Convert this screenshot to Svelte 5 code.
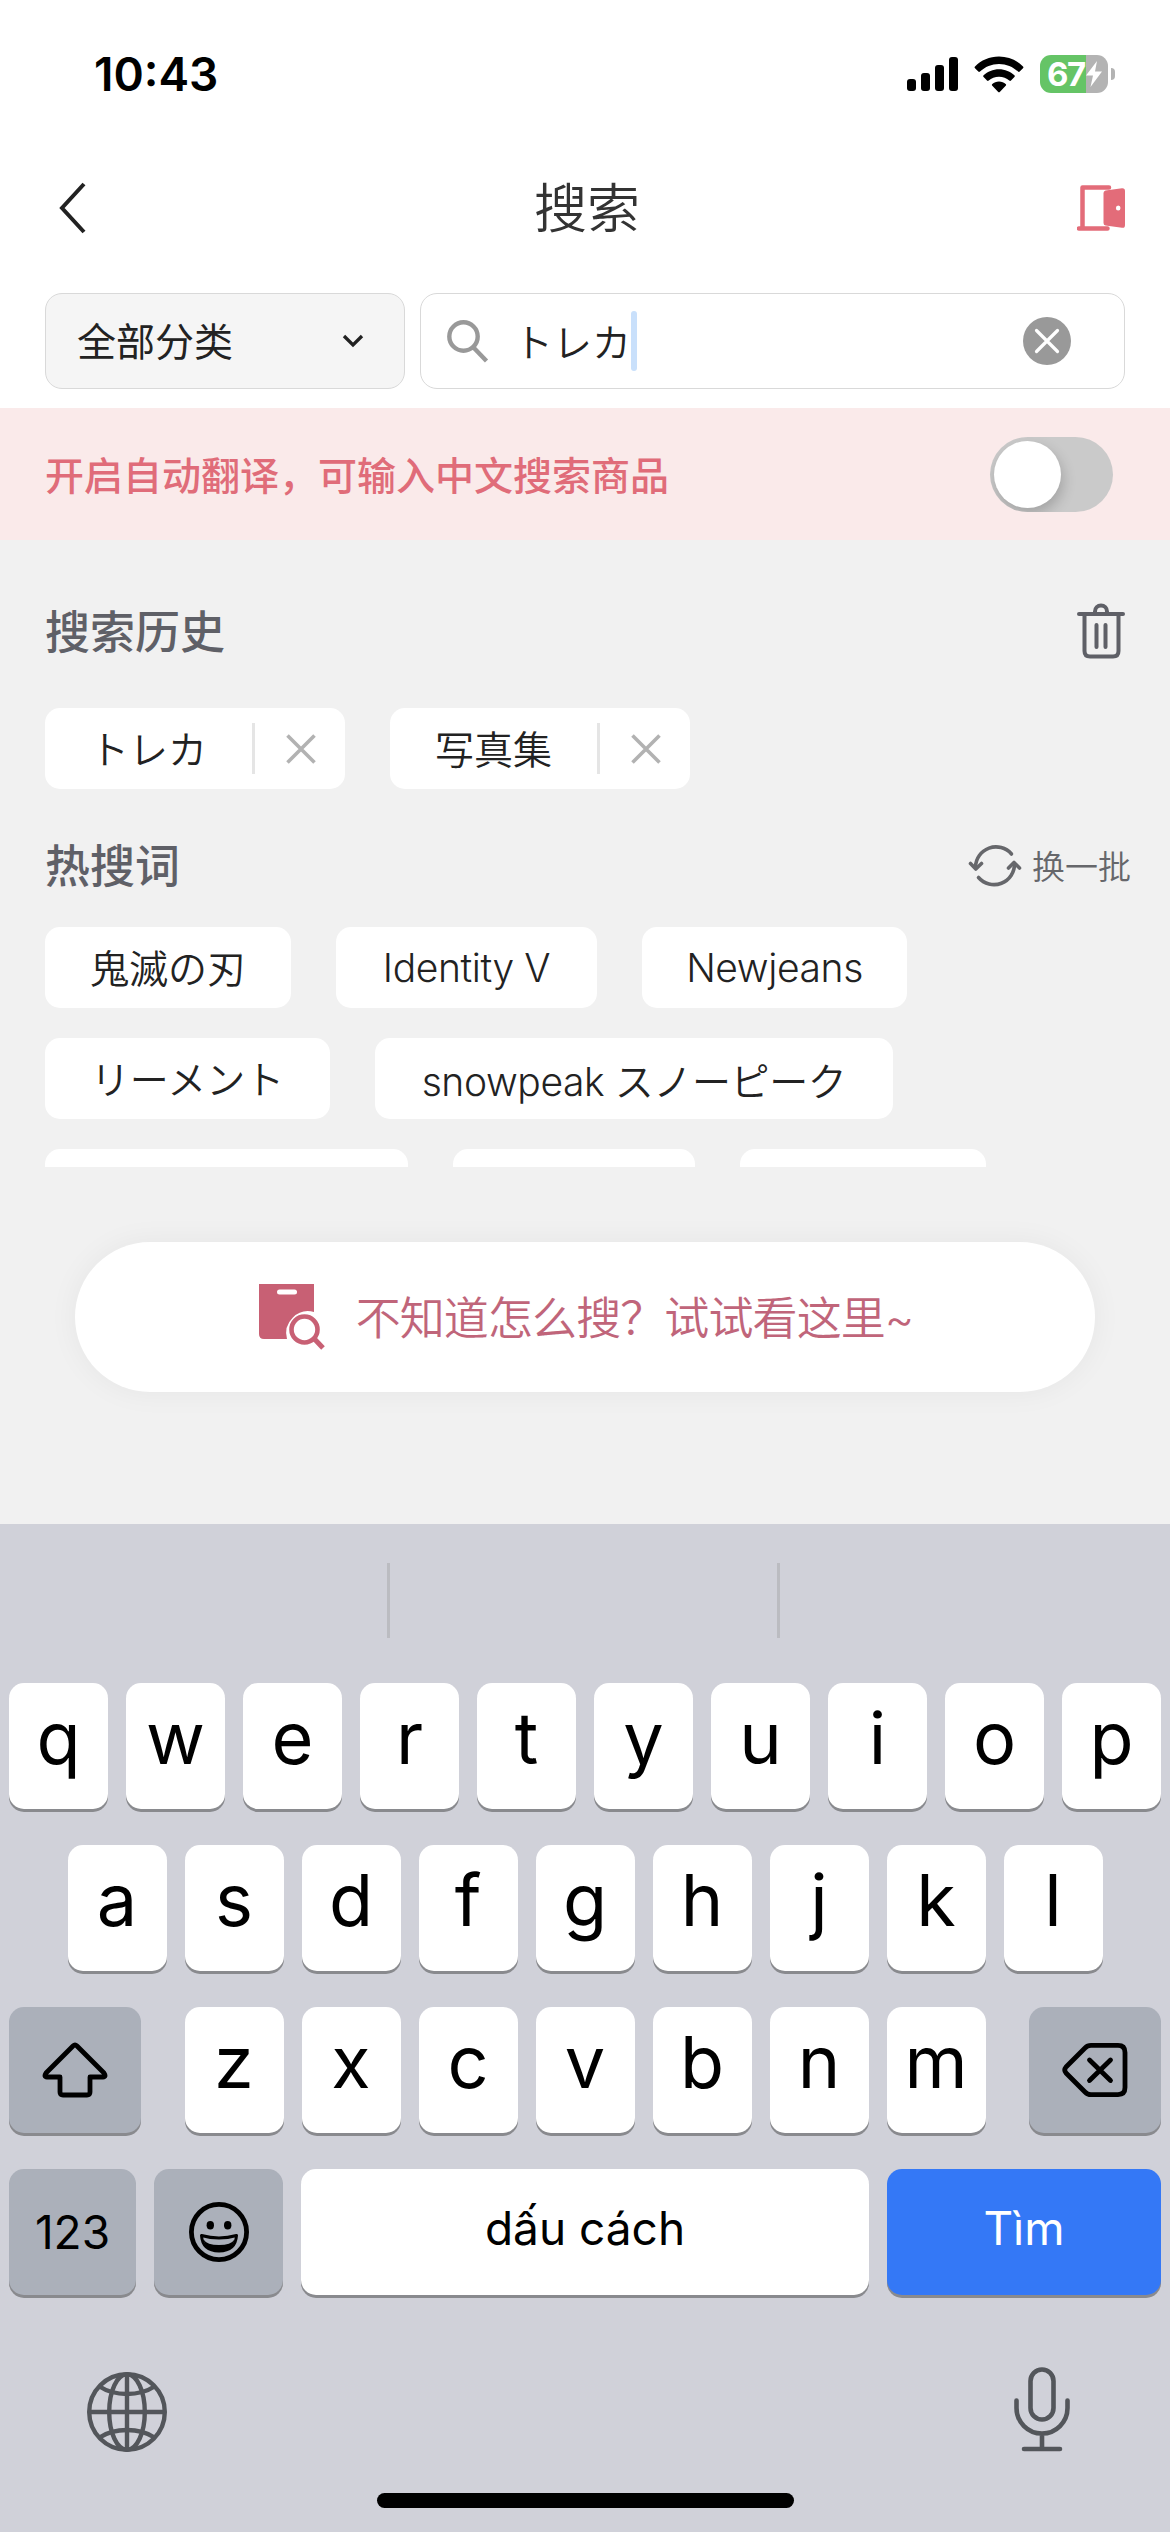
<script lang="ts">
  let keyword = 'トレカ';
  let autoTranslate = false;

  const history = ['トレカ', '写真集'];

  const hotRows = [
    [
      { text: '鬼滅の刃', width: 246 },
      { text: 'Identity V', width: 261 },
      { text: 'Newjeans', width: 265 },
    ],
    [
      { text: 'リーメント', width: 285 },
      { text: 'snowpeak スノーピーク', width: 518 },
    ],
    // only the top edge of this row shows
    [
      { text: '', width: 363 },
      { text: '', width: 242 },
      { text: '', width: 246 },
    ],
  ];

  const row1 = 'qwertyuiop'.split('');
  const row2 = 'asdfghjkl'.split('');
  const row3 = 'zxcvbnm'.split('');

  function isLatin(text: string) {
    return /^[a-z]/i.test(text);
  }

  function toggleTranslate() {
    autoTranslate = !autoTranslate;
  }

  function clearKeyword() {
    keyword = '';
  }
</script>

<div class="screen">
  <div class="status-bar">
    <span class="time">10:43</span>
    <div class="status-icons">
      <svg class="signal" width="52" height="34" viewBox="0 0 52 34">
        <rect x="0" y="22" width="9" height="12" rx="3" />
        <rect x="14" y="16" width="9" height="18" rx="3" />
        <rect x="28" y="8" width="9" height="26" rx="3" />
        <rect x="42" y="0" width="9" height="34" rx="3" />
      </svg>
      <svg class="wifi" width="50" height="37" viewBox="0 0 50 37">
        <path d="M25 0.5C34.5 0.5 43 4.3 49 10.4C49.6 11 49.6 11.6 49 12.200L45.700 15.600C45.200 16.100 44.600 16.100 44 15.600C39 10.800 32.300 8 25 8S11 10.800 6 15.600C5.400 16.100 4.800 16.100 4.300 15.600L1 12.200C0.400 11.600 0.400 11 1 10.400C7 4.300 15.500 0.500 25 0.500Z" />
        <path d="M25 13.200C31 13.200 36.400 15.500 40.400 19.300C41 19.900 41 20.500 40.400 21.100L37 24.500C36.500 25 35.900 25 35.300 24.500C32.600 22.100 29 20.700 25 20.700S17.400 22.100 14.700 24.500C14.100 25 13.500 25 13 24.500L9.600 21.100C9 20.500 9 19.900 9.600 19.300C13.600 15.500 19 13.200 25 13.200Z" />
        <path d="M25 25.400C27.700 25.400 30 26.400 31.700 28C32.300 28.600 32.300 29.200 31.700 29.800L26 35.700C25.300 36.400 24.700 36.400 24 35.700L18.300 29.800C17.700 29.200 17.700 28.600 18.300 28C20 26.400 22.300 25.400 25 25.400Z" />
      </svg>
      <div class="battery">
        <div class="battery-body">
          <span>67</span>
          <svg width="18" height="28" viewBox="0 0 18 26"><path d="M12 0L1 14.500H8L5.500 26L17 10.500H10Z" fill="#fff" /></svg>
        </div>
        <div class="battery-cap"></div>
      </div>
    </div>
  </div>

  <header class="nav">
    <button class="icon-button" aria-label="back">
      <svg width="34" height="56" viewBox="0 0 34 56"><path d="M28 4L6 28L28 52" fill="none" stroke="#222" stroke-width="4" /></svg>
    </button>
    <h1>搜索</h1>
    <button class="icon-button" aria-label="exit">
      <svg width="48" height="46" viewBox="0 0 48 46">
        <path d="M32 2.500H5.500V43.500M2 43.500H30.500" fill="none" stroke="#e36c79" stroke-width="4.500" stroke-linecap="round" stroke-linejoin="round" />
        <path d="M28.500 5.500L45 3.200Q48 3 48 6V40Q48 43.300 45 42.800L28.500 40.500Q26.500 40 26.500 38V8Q26.500 6 28.500 5.500Z" fill="#e36c79" />
        <ellipse cx="41.200" cy="23" rx="2.300" ry="2.500" fill="#fff" />
      </svg>
    </button>
  </header>

  <div class="search-row">
    <button class="category">
      <span>全部分类</span>
      <svg width="22" height="14" viewBox="0 0 22 14"><path d="M2 2L11 11L20 2" fill="none" stroke="#222" stroke-width="3.300" /></svg>
    </button>
    <div class="search-box">
      <svg width="42" height="43" viewBox="0 0 42 43">
        <circle cx="16.500" cy="16.500" r="14.200" fill="none" stroke="#999" stroke-width="4.400" />
        <path d="M26.500 27.500L39.500 41" stroke="#999" stroke-width="4.400" />
      </svg>
      <span class="keyword" lang="ja">{keyword}</span>
      <span class="caret"></span>
      <button class="icon-button clear" aria-label="clear" on:click={clearKeyword}>
        <svg width="48" height="48" viewBox="0 0 48 48">
          <circle cx="24" cy="24" r="24" fill="#999" />
          <path d="M13.500 13.500L34.500 34.500M34.500 13.500L13.500 34.500" stroke="#fff" stroke-width="3.200" stroke-linecap="round" />
        </svg>
      </button>
    </div>
  </div>

  <div class="translate">
    <span>开启自动翻译，可输入中文搜索商品</span>
    <button class="switch" class:on={autoTranslate} aria-label="auto translate" on:click={toggleTranslate}>
      <span class="knob"></span>
    </button>
  </div>

  <main>
    <div class="section-head">
      <h2>搜索历史</h2>
      <button class="icon-button" aria-label="clear history">
        <svg width="48" height="56" viewBox="0 0 48 56">
          <g fill="none" stroke="#5f6067" stroke-width="4" stroke-linecap="round">
            <path d="M2 11H46" />
            <path d="M18 10V8.500A6 6 0 0 1 30 8.500V10" />
            <path d="M7.500 12V48Q7.500 53.500 13 53.500H36Q41.500 53.500 41.500 48V12" />
            <path d="M19.500 22V44M28.500 22V44" />
          </g>
        </svg>
      </button>
    </div>

    <div class="chips">
      {#each history as item}
        <div class="chip history-chip">
          <span class="chip-text" lang="ja">{item}</span>
          <span class="chip-line"></span>
          <button class="icon-button chip-x" aria-label="remove">
            <svg width="30" height="30" viewBox="0 0 30 30"><path d="M1.500 1.500L28.500 28.500M28.500 1.500L1.500 28.500" stroke="#b2b2b2" stroke-width="3.600" /></svg>
          </button>
        </div>
      {/each}
    </div>

    <div class="section-head hot-head">
      <h2>热搜词</h2>
      <button class="refresh">
        <svg width="54" height="48" viewBox="0 0 54 48">
          <g fill="none" stroke="#66676b" stroke-width="3.600" stroke-linecap="round" stroke-linejoin="round">
            <path d="M43.500 13A20.500 20.500 0 0 0 7.500 26" />
            <path d="M2.500 22.500L7.800 28L13.500 22.500" />
            <path d="M10.500 36.500A20.500 20.500 0 0 0 46.500 22.500" />
            <path d="M40.500 27L46 21.500L51.500 27" />
          </g>
        </svg>
        <span>换一批</span>
      </button>
    </div>

    <div class="hot-words">
      {#each hotRows as row}
        <div class="chips">
          {#each row as word}
            <div class="chip hot-chip" class:latin={isLatin(word.text)} style="width: {word.width}px" lang="ja">{word.text}</div>
          {/each}
        </div>
      {/each}
    </div>

    <button class="help">
      <svg width="66" height="66" viewBox="0 0 66 66">
        <path d="M0 0H55V28A22 22 0 0 0 28 55H5Q0 55 0 50Z" fill="#c86074" />
        <rect x="18" y="5.500" width="20" height="5" rx="2.500" fill="#fff" />
        <circle cx="45.500" cy="45.500" r="13" fill="#fff" stroke="#c86074" stroke-width="4.600" />
        <path d="M55 54.500L64 64" stroke="#c86074" stroke-width="5" />
      </svg>
      <span>不知道怎么搜？试试看这里~</span>
    </button>
  </main>

  <div class="keyboard">
    <div class="suggestions">
      <span></span>
      <span></span>
      <span></span>
    </div>
    <div class="keys">
      <div class="key-row">
        {#each row1 as key}
          <button class="key letter">{key}</button>
        {/each}
      </div>
      <div class="key-row">
        {#each row2 as key}
          <button class="key letter">{key}</button>
        {/each}
      </div>
      <div class="key-row spread">
        <button class="key gray wide" aria-label="shift">
          <svg width="66" height="56" viewBox="0 0 66 56"><path d="M31 4Q33 2 35 4L62 31Q64.500 35 61 35H48V50Q48 53 45 53H21Q18 53 18 50V35H5Q1.500 35 4 31Z" fill="none" stroke="#000" stroke-width="4.800" stroke-linejoin="round" /></svg>
        </button>
        <div class="key-row">
          {#each row3 as key}
            <button class="key letter">{key}</button>
          {/each}
        </div>
        <button class="key gray wide" aria-label="delete">
          <svg width="66" height="54" viewBox="0 0 66 54">
            <g fill="none" stroke="#000" stroke-width="4.800" stroke-linejoin="round" stroke-linecap="round">
              <path d="M29 2.400H56Q63 2.400 63 9.400V44.600Q63 51.600 56 51.600H29Q25.500 51.600 23 49L4 30Q1.500 27 4 24L23 5Q25.500 2.400 29 2.400Z" />
              <path d="M27.500 17L48.500 37.500M48.500 17L27.500 37.500" />
            </g>
          </svg>
        </button>
      </div>
      <div class="key-row bottom-row">
        <button class="key gray numbers">123</button>
        <button class="key gray emoji" aria-label="emoji">
          <svg width="60" height="60" viewBox="0 0 60 60">
            <circle cx="30" cy="30" r="27.600" fill="none" stroke="#000" stroke-width="4.800" />
            <ellipse cx="21.300" cy="23.200" rx="3.700" ry="4.200" />
            <ellipse cx="38.700" cy="23.200" rx="3.700" ry="4.200" />
            <path d="M12.500 33.500Q30 38.500 47.500 33.500Q46.500 49 30 49T12.500 33.500Z" fill="none" stroke="#000" stroke-width="3" stroke-linejoin="round" />
            <path d="M14.500 37.500Q18 43 30 43T45.500 37.500Q43 49 30 49T14.500 37.500Z" />
          </svg>
        </button>
        <button class="key space">dấu cách</button>
        <button class="key search">Tìm</button>
      </div>
    </div>
    <div class="system-row">
      <svg class="globe" width="80" height="80" viewBox="0 0 80 80">
        <g fill="none" stroke="#53565b" stroke-width="4.400">
          <circle cx="40" cy="40" r="37.800" />
          <ellipse cx="40" cy="40" rx="17.800" ry="37.800" />
          <path d="M40 2V78M2 40H78" />
          <path d="M12.500 14.500Q24 22 40 22T67.500 14.500M12.500 65.500Q24 58 40 58T67.500 65.500" />
        </g>
      </svg>
      <svg width="56" height="85" viewBox="0 0 56 85">
        <g fill="none" stroke="#53565b" stroke-width="4.600" stroke-linecap="round">
          <rect x="16.500" y="2.500" width="23" height="50" rx="11.500" />
          <path d="M2.500 33.500V41A25.500 25.500 0 0 0 53.500 41V33.500M28 67V81M10 82H46" />
        </g>
      </svg>
    </div>
    <div class="home-indicator"></div>
  </div>
</div>

<style>
  :global(body) {
    margin: 0;
  }

  .screen {
    width: 1170px;
    height: 2532px;
    display: flex;
    flex-direction: column;
    overflow: hidden;
    background: #fff;
    color: #222;
    font-family: "Inter", "Noto Sans CJK SC", sans-serif;
  }

  button {
    margin: 0;
    padding: 0;
    border: none;
    background: none;
    color: inherit;
    font: inherit;
    cursor: pointer;
  }

  svg {
    display: block;
    flex: none;
  }

  h1,
  h2 {
    margin: 0;
  }

  .icon-button {
    display: flex;
  }

  .status-bar {
    height: 148px;
    box-sizing: border-box;
    padding: 0 55px 0 94px;
    display: flex;
    justify-content: space-between;
    align-items: center;
  }

  .time {
    font-size: 46px;
    font-weight: 600;
    color: #000;
    line-height: 56px;
  }

  .status-icons {
    display: flex;
    align-items: center;
  }

  .signal {
    margin-right: 15px;
  }

  .wifi {
    margin-right: 16px;
  }

  .battery {
    display: flex;
    align-items: center;
    gap: 3px;
  }

  .battery-body {
    width: 68px;
    height: 38px;
    box-sizing: border-box;
    padding-left: 7px;
    border-radius: 11px;
    background: linear-gradient(to right, #65c466 46px, #b3b3b3 46px);
    display: flex;
    align-items: center;
  }

  .battery-body span {
    width: 38px;
    color: #fff;
    font-size: 33px;
    font-weight: 700;
    letter-spacing: -1.5px;
    line-height: 38px;
  }

  .battery-cap {
    width: 4px;
    height: 12px;
    border-radius: 0 4px 4px 0;
    background: #b3b3b3;
  }

  .nav {
    height: 120px;
    padding: 0 45px 0 56px;
    display: flex;
    justify-content: space-between;
    align-items: center;
  }

  .nav h1 {
    padding: 2px 0 0 7px;
    font-size: 53px;
    font-weight: 350;
    color: #333;
    line-height: 60px;
  }

  .search-row {
    height: 96px;
    margin: 25px 45px 19px;
    display: flex;
    gap: 15px;
  }

  .category,
  .search-box {
    box-sizing: border-box;
    border: 1px solid #d9d9d9;
    border-radius: 17px;
    display: flex;
    align-items: center;
    font-size: 39px;
  }

  .category {
    width: 360px;
    padding: 0 40px 0 31px;
    justify-content: space-between;
    background: #f5f5f5;
    font-weight: 400;
  }

  .category span {
    padding-bottom: 4px;
  }

  .keyword,
  .translate > span {
    padding-bottom: 3px;
  }

  .search-box {
    flex: 1;
    padding: 0 53px 0 26px;
  }

  .keyword {
    margin-left: 25px;
    font-weight: 350;
  }

  .caret {
    width: 6px;
    height: 60px;
    border-radius: 3px;
    background: #c9e0fb;
  }

  .clear {
    margin-left: auto;
  }

  .translate {
    height: 132px;
    padding: 0 57px 0 45px;
    display: flex;
    justify-content: space-between;
    align-items: center;
    background: #faeaea;
    color: #e06c79;
    font-size: 39px;
    font-weight: 500;
  }

  .switch {
    width: 123px;
    height: 75px;
    border-radius: 38px;
    background: #cacaca;
    padding: 4px;
    display: flex;
    overflow: hidden;
  }

  .switch.on {
    justify-content: flex-end;
    background: #e06c79;
  }

  .knob {
    width: 67px;
    height: 67px;
    border-radius: 50%;
    background: #fff;
    box-shadow: 2px 6px 14px rgba(0, 0, 0, 0.2);
  }

  main {
    height: 984px;
    background: #f1f1f1;
  }

  .section-head {
    height: 168px;
    padding: 14px 45px 0;
    box-sizing: border-box;
    display: flex;
    justify-content: space-between;
    align-items: center;
  }

  .section-head h2 {
    padding-top: 4px;
    font-size: 45px;
    font-weight: 500;
    color: #5f6067;
    line-height: 60px;
  }

  .hot-head {
    height: 138px;
    padding: 14px 39px 0 45px;
  }

  .refresh {
    display: flex;
    align-items: center;
    gap: 10px;
    color: #66676b;
    font-size: 33px;
    font-weight: 350;
    line-height: 44px;
  }

  .refresh span {
    padding-top: 3px;
  }

  .chips {
    padding: 0 45px;
    display: flex;
    gap: 45px;
  }

  .chip {
    height: 81px;
    box-sizing: border-box;
    border-radius: 15px;
    background: #fff;
    display: flex;
    align-items: center;
    font-family: "Inter", "Noto Sans CJK JP", sans-serif;
    font-size: 39px;
    font-weight: 350;
    white-space: nowrap;
  }

  .history-chip {
    width: 300px;
  }

  .chip-text {
    padding: 0 45px 3px;
  }

  .chip-line {
    width: 3px;
    height: 51px;
    background: #e5e5e5;
  }

  .chip-x {
    margin-left: 31px;
  }

  .hot-words {
    height: 240px;
    overflow: hidden;
    display: flex;
    flex-direction: column;
    gap: 30px;
  }

  .hot-chip {
    justify-content: center;
    padding-bottom: 3px;
  }

  .latin {
    padding-bottom: 0;
    letter-spacing: -0.4px;
  }

  .help {
    width: 1020px;
    height: 150px;
    box-sizing: border-box;
    margin: 75px auto 0;
    padding-left: 2px;
    border-radius: 75px;
    background: #fff;
    box-shadow: 0 0 30px rgba(0, 0, 0, 0.05);
    display: flex;
    justify-content: center;
    align-items: center;
    gap: 31px;
    color: #c0657a;
    font-size: 45px;
    font-weight: 350;
    letter-spacing: -0.9px;
    white-space: nowrap;
  }

  .help span {
    padding-bottom: 4px;
  }

  .keyboard {
    height: 1008px;
    background: #d0d1d9;
    color: #000;
  }

  .suggestions {
    height: 75px;
    padding: 39px 0 45px;
    display: flex;
  }

  .suggestions span {
    width: 387px;
  }

  .suggestions span + span {
    border-left: 3px solid #bbbcc1;
  }

  .keys {
    display: flex;
    flex-direction: column;
    gap: 36px;
  }

  .key-row {
    display: flex;
    justify-content: center;
    gap: 18px;
  }

  .spread,
  .bottom-row {
    padding: 0 9px;
    justify-content: space-between;
  }

  .key {
    width: 99px;
    height: 126px;
    border-radius: 15px;
    background: #fff;
    box-shadow: 0 3px 0 #898a8e;
    display: flex;
    justify-content: center;
    align-items: center;
    font-size: 46px;
  }

  .letter {
    box-sizing: border-box;
    font-size: 72px;
    padding-bottom: 17px;
  }

  .gray {
    background: #abb0ba;
  }

  .wide {
    width: 132px;
  }

  .numbers {
    width: 127px;
  }

  .emoji {
    width: 129px;
  }

  .space,
  .search {
    box-sizing: border-box;
    padding-bottom: 8px;
  }

  .space {
    flex: 1;
  }

  .search {
    width: 274px;
    background: #3478f6;
    color: #fff;
  }

  .system-row {
    height: 86px;
    padding: 71px 100px 0 87px;
    display: flex;
    justify-content: space-between;
    align-items: center;
  }

  .globe {
    margin-top: 5px;
  }

  .home-indicator {
    width: 417px;
    height: 15px;
    margin: 41px auto 0;
    border-radius: 8px;
    background: #000;
  }
</style>
